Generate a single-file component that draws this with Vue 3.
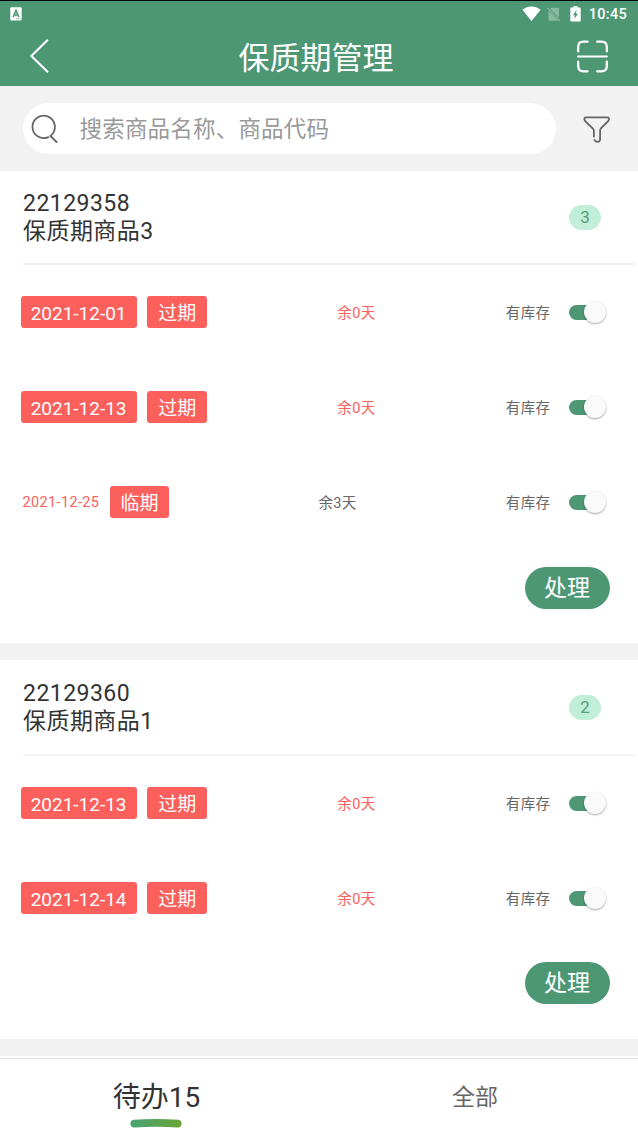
<template>
  <div class="page">
    <header class="header">
      <div class="status-bar">
        <svg class="status-app" width="12" height="14" viewBox="0 0 12 14">
          <rect x="0.3" y="0.3" width="11.4" height="13.2" rx="1" fill="#fff" />
          <path d="M3.2 10 L6 3.6 L8.8 10 M4.3 8 H7.7" fill="none" stroke="#4d9775" stroke-width="1.6" />
          <path d="M6 11.8 H11" stroke="#4d9775" stroke-width="0.8" stroke-dasharray="1.2 0.6" />
        </svg>
        <div class="status-right">
          <svg class="wifi" width="19" height="16" viewBox="0 0 19 16">
            <path d="M0.4 3.8 C5.5 -0.7 13.5 -0.7 18.6 3.8 L9.5 15 Z" fill="#fff" />
          </svg>
          <svg class="sim" width="14" height="15" viewBox="0 0 14 15">
            <path d="M4.3 0.8 H11 Q12 0.8 12 1.8 V10.8 L3.3 2 Z M1.5 3.6 L11.6 13.8 H2.5 Q1.5 13.8 1.5 12.8 Z" fill="#89b9a1" />
            <path d="M0.5 1 L13 13.8" stroke="#89b9a1" stroke-width="1.2" />
          </svg>
          <svg class="battery" width="11" height="16" viewBox="0 0 11 16">
            <path d="M3.3 0.3 H7.7 V1.6 H9.8 Q10.7 1.6 10.7 2.5 V14.6 Q10.7 15.6 9.8 15.6 H1.2 Q0.3 15.6 0.3 14.6 V2.5 Q0.3 1.6 1.2 1.6 H3.3 Z" fill="#fff" />
            <path d="M6.6 4 L2.9 9.2 H5 L4.3 13 L8.1 7.7 H6 Z" fill="#4d9775" />
          </svg>
          <span class="time">10:45</span>
        </div>
      </div>
      <div class="nav-bar">
        <svg class="back" width="20" height="36" viewBox="0 0 20 36">
          <path d="M18.8 1.8 L2.4 18 L19 34.2" fill="none" stroke="#fff" stroke-width="2.1" />
        </svg>
        <h1 class="title">保质期管理</h1>
        <svg class="scan" width="32" height="33" viewBox="0 0 32 33">
          <g fill="none" stroke="#fff" stroke-width="2.2" stroke-linecap="round">
            <path d="M2.2 11.5 V7 Q2.2 1.7 7.4 1.7 H11.6" />
            <path d="M21.2 1.7 H25.4 Q30.8 1.7 30.8 7 V11.5" />
            <path d="M2.2 21.5 V26 Q2.2 31.3 7.4 31.3 H11.6" />
            <path d="M21.2 31.3 H25.4 Q30.8 31.3 30.8 26 V21.5" />
            <path d="M2 16.5 H30.8" />
          </g>
        </svg>
      </div>
    </header>

    <div class="search-bar">
      <label class="search-box">
        <svg width="28" height="30" viewBox="0 0 28 30">
          <g fill="none" stroke="#666" stroke-width="1.8" stroke-linecap="round">
            <path d="M17.3 23.1 A11.2 11.2 0 1 1 20.3 21.1 L19.4 22 L25.6 28" />
          </g>
        </svg>
        <input v-model="keyword" type="text" placeholder="搜索商品名称、商品代码" />
      </label>
      <svg class="filter" width="28" height="28" viewBox="0 0 28 28">
        <path
          d="M11.9 21.5 V16 Q11.9 14.6 10.9 13.6 L3 5.9 Q1.2 2.4 4.2 2.4 H25 Q28.2 2.4 26.4 5.9 L19.1 13.2 Q18.1 14.2 18.1 15.6 V24 Q18.1 26.8 15.7 26.8 Q13.6 26.8 12.4 24.9"
          fill="none"
          stroke="#666"
          stroke-width="1.8"
          stroke-linecap="round"
        />
      </svg>
    </div>

    <main class="list">
      <section v-for="item in products" :key="item.code" class="card">
        <div class="card-head">
          <div class="product">
            <div>{{ item.code }}</div>
            <div>{{ item.name }}</div>
          </div>
          <span class="count">{{ item.batches.length }}</span>
        </div>
        <div v-for="batch in item.batches" :key="batch.date" class="row">
          <div class="row-left">
            <span :class="batch.expired ? 'tag date-tag' : 'date'">{{ batch.date }}</span>
            <span class="tag">{{ batch.expired ? '过期' : '临期' }}</span>
          </div>
          <span class="remain" :class="{ danger: batch.expired }">余{{ batch.days }}天</span>
          <div class="row-right">
            <span class="stock-label">有库存</span>
            <span class="switch" :class="{ off: !batch.stock }" @click="batch.stock = !batch.stock">
              <i class="knob"></i>
            </span>
          </div>
        </div>
        <div class="card-foot">
          <button class="handle-btn">处理</button>
        </div>
      </section>
    </main>

    <nav class="tabs">
      <div
        v-for="tab in tabs"
        :key="tab.key"
        class="tab"
        :class="{ active: activeTab === tab.key }"
        @click="activeTab = tab.key"
      >
        <span>{{ tab.label }}</span>
        <svg v-if="activeTab === tab.key" class="tab-line" width="56" height="14" viewBox="0 0 56 14">
          <defs>
            <linearGradient id="tabLine" x1="0" x2="1" y1="0" y2="0">
              <stop offset="0" stop-color="#48a375" />
              <stop offset="1" stop-color="#68a436" />
            </linearGradient>
          </defs>
          <path d="M4.6 2.8 Q27 1 49.4 2.8 Q52.6 3.3 52.6 6.6 Q52.4 10.5 49 10.5 Q27 9.1 5 10.5 Q1.6 10.5 1.4 6.6 Q1.4 3.3 4.6 2.8 Z" fill="url(#tabLine)" />
        </svg>
      </div>
    </nav>
  </div>
</template>

<script setup>
import { ref } from 'vue';

const keyword = ref('');
const activeTab = ref('todo');

const tabs = [
  { key: 'todo', label: '待办15' },
  { key: 'all', label: '全部' }
];

const products = ref([
  {
    code: '22129358',
    name: '保质期商品3',
    batches: [
      { date: '2021-12-01', expired: true, days: 0, stock: true },
      { date: '2021-12-13', expired: true, days: 0, stock: true },
      { date: '2021-12-25', expired: false, days: 3, stock: true }
    ]
  },
  {
    code: '22129360',
    name: '保质期商品1',
    batches: [
      { date: '2021-12-13', expired: true, days: 0, stock: true },
      { date: '2021-12-14', expired: true, days: 0, stock: true }
    ]
  }
]);
</script>

<style>
body {
  margin: 0;
  background: #f2f2f2;
}
</style>

<style scoped>
.page {
  display: flex;
  flex-direction: column;
  height: 100vh;
  overflow: hidden;
  box-sizing: border-box;
  border-top: 1px solid #000;
  background: #f2f2f2;
  color: #333;
  font-family: Roboto, 'Noto Sans CJK SC', sans-serif;
}

svg {
  display: block;
  flex: none;
}

.header {
  flex: none;
  height: 85px;
  background: #4d9775;
  color: #fff;
}

.status-bar {
  display: flex;
  align-items: center;
  justify-content: space-between;
  height: 26px;
  padding: 0 11px 0 10px;
}

.status-right {
  display: flex;
  align-items: center;
}

.sim {
  margin-left: 6px;
}

.battery {
  margin-left: 9px;
}

.time {
  margin-left: 8px;
  padding-top: 2px;
  font-size: 14.5px;
  font-weight: 500;
  letter-spacing: 0.3px;
  line-height: 24px;
}

.nav-bar {
  display: flex;
  align-items: center;
  justify-content: space-between;
  height: 58px;
  padding: 0 30px 0 29px;
}

.title {
  margin: 0 0 0 7px;
  padding-top: 6px;
  font-size: 31px;
  font-weight: 400;
  line-height: 52px;
}

.search-bar {
  display: flex;
  flex: none;
  align-items: center;
  height: 85px;
  padding: 0 28px 0 23px;
}

.search-box {
  display: flex;
  flex: 1;
  align-items: center;
  height: 51px;
  padding-left: 8px;
  border-radius: 26px;
  background: #fff;
}

.search-box input {
  flex: 1;
  min-width: 0;
  margin-left: 20.5px;
  padding: 1px 0 0;
  border: 0;
  outline: none;
  background: transparent;
  color: #333;
  font-family: inherit;
  font-size: 22.5px;
  letter-spacing: 0.2px;
}

.search-box input::placeholder {
  color: #999;
  opacity: 1;
}

.filter {
  margin-left: 26px;
  overflow: visible;
}

.list {
  display: flex;
  flex: 1;
  flex-direction: column;
  gap: 17px;
  min-height: 0;
  overflow: hidden;
}

.card {
  flex: none;
  background: #fff;
}

.card-head {
  display: flex;
  align-items: center;
  justify-content: space-between;
  height: 92px;
  margin: 0 3px 0 23px;
  padding-right: 34px;
  border-bottom: 2px solid #efefef;
}

.card + .card .card-head {
  height: 94px;
  border-bottom-color: #f5f5f5;
}

.product {
  padding-top: 1px;
  font-size: 23px;
  letter-spacing: 0.45px;
  line-height: 28px;
}

.count {
  width: 32px;
  height: 25px;
  border-radius: 13px;
  background: #c1eed8;
  color: #559b7b;
  font-size: 17px;
  line-height: 25px;
  text-align: center;
}

.row {
  display: flex;
  align-items: center;
  justify-content: space-between;
  box-sizing: border-box;
  height: 95px;
  padding: 0 31.6px 1px 20.6px;
  color: #666;
  font-size: 14.5px;
  letter-spacing: 0.35px;
}

.row-left {
  display: flex;
  align-items: center;
  gap: 10.8px;
}

.tag {
  width: 59.6px;
  height: 32px;
  border-radius: 3px;
  background: #fc605d;
  color: #fff;
  font-size: 19px;
  letter-spacing: 0;
  line-height: 35px;
  text-align: center;
}

.date-tag {
  width: 116px;
}

.date {
  width: 76.4px;
  padding-left: 2px;
  color: #fc605d;
  white-space: nowrap;
}

.remain,
.stock-label {
  padding-bottom: 2px;
}

.danger {
  color: #fc605d;
}

.row-right {
  display: flex;
  align-items: center;
}

.switch {
  display: flex;
  align-items: center;
  justify-content: flex-end;
  width: 37px;
  height: 15px;
  margin-left: 19px;
  border-radius: 8px;
  background: linear-gradient(to right, #4d9775 28px, transparent 28px);
}

.switch.off {
  justify-content: flex-start;
  background: #ccc;
}

.knob {
  width: 22px;
  height: 22px;
  border-radius: 50%;
  background: #fafafa;
  box-shadow: 0 1px 2px rgba(0, 0, 0, 0.35);
}

.card-foot {
  display: flex;
  justify-content: flex-end;
  padding: 17px 28.4px 34px 0;
}

.card + .card .card-foot {
  padding-top: 16px;
}

.handle-btn {
  width: 85px;
  height: 42px;
  padding: 1px 0 0;
  border: 0;
  border-radius: 21px;
  background: #4d9775;
  color: #fff;
  font-family: inherit;
  font-size: 23px;
  line-height: 41px;
}

.card + .card .card-foot {
  padding-bottom: 35px;
}

.tabs {
  display: grid;
  flex: none;
  grid-template-columns: 313px 324px;
  box-sizing: border-box;
  height: 72px;
  border-top: 2px solid #fff;
  background: #fff;
  box-shadow: inset 0 1px 0 #e3e3e3;
}

.tab {
  display: flex;
  flex-direction: column;
  align-items: center;
  color: #666;
  font-size: 23px;
  line-height: 80px;
}

.tab.active {
  color: #333;
  font-size: 28px;
}

.tab-line {
  margin-top: -21px;
}
</style>
